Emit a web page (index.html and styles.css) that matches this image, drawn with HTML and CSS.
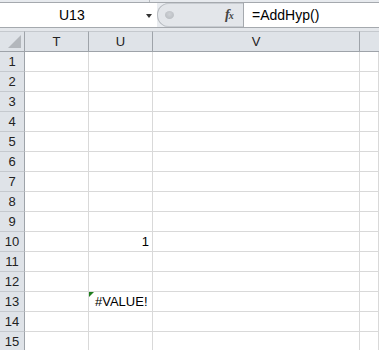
FILE: index.html
```html
<!DOCTYPE html>
<html>
<head>
<meta charset="utf-8">
<link rel="stylesheet" href="styles.css">
</head>
<body>
<div class="app">
  <div class="topstrip"><span class="tick"></span></div>
  <div class="fbar">
    <div class="namebox"><span class="name">U13</span><span class="arrow"></span></div>
    <div class="pill"><span class="knob"></span><span class="fx"><i>f</i><i class="x">x</i></span></div>
    <div class="formula">=AddHyp()</div>
  </div>
  <div class="gap"></div>
  <div class="grid">
    <div class="hd corner"><span class="tri"></span></div>
    <div class="hd">T</div>
    <div class="hd">U</div>
    <div class="hd">V</div>
    <div class="hd last"></div>

    <div class="rh">1</div><div class="c"></div><div class="c"></div><div class="c"></div><div class="c"></div>
    <div class="rh">2</div><div class="c"></div><div class="c"></div><div class="c"></div><div class="c"></div>
    <div class="rh">3</div><div class="c"></div><div class="c"></div><div class="c"></div><div class="c"></div>
    <div class="rh">4</div><div class="c"></div><div class="c"></div><div class="c"></div><div class="c"></div>
    <div class="rh">5</div><div class="c"></div><div class="c"></div><div class="c"></div><div class="c"></div>
    <div class="rh">6</div><div class="c"></div><div class="c"></div><div class="c"></div><div class="c"></div>
    <div class="rh">7</div><div class="c"></div><div class="c"></div><div class="c"></div><div class="c"></div>
    <div class="rh">8</div><div class="c"></div><div class="c"></div><div class="c"></div><div class="c"></div>
    <div class="rh">9</div><div class="c"></div><div class="c"></div><div class="c"></div><div class="c"></div>
    <div class="rh">10</div><div class="c"></div><div class="c num">1</div><div class="c"></div><div class="c"></div>
    <div class="rh">11</div><div class="c"></div><div class="c"></div><div class="c"></div><div class="c"></div>
    <div class="rh">12</div><div class="c"></div><div class="c"></div><div class="c"></div><div class="c"></div>
    <div class="rh">13</div><div class="c"></div><div class="c err"><span class="flag"></span>#VALUE!</div><div class="c"></div><div class="c"></div>
    <div class="rh">14</div><div class="c"></div><div class="c"></div><div class="c"></div><div class="c"></div>
    <div class="rh">15</div><div class="c"></div><div class="c"></div><div class="c"></div><div class="c"></div>
  </div>
</div>
</body>
</html>
```

FILE: styles.css
```css
html, body {
  margin: 0;
  padding: 0;
  background: #ffffff;
}
body {
  width: 379px;
  height: 350px;
  overflow: hidden;
  font-family: "Liberation Sans", Arial, sans-serif;
  font-size: 13px;
  color: #000;
}
.app {
  width: 379px;
}
.topstrip {
  height: 2px;
  background: #e7eaee;
  border-bottom: 1px solid #a5a9ae;
  position: relative;
}
.tick {
  position: absolute;
  left: 149px;
  top: 0;
  width: 1px;
  height: 2px;
  background: #b9bcc0;
}
.fbar {
  display: flex;
  height: 24px;
  border-bottom: 1px solid #a5a9ae;
  background: #e9ecf0;
}
.namebox {
  width: 157px;
  background: #fff;
  display: flex;
  align-items: center;
  position: relative;
}
.name {
  margin-left: 59px;
  font-size: 14px;
}
.arrow {
  position: absolute;
  left: 146px;
  top: 11px;
  width: 0;
  height: 0;
  border-left: 3px solid transparent;
  border-right: 3px solid transparent;
  border-top: 4px solid #333;
}
.pill {
  width: 86px;
  background: #e3e6ea;
  border-radius: 12px 0 0 12px;
  box-shadow: inset 1px 0 0 #b8bcc1, inset 0 1px 0 #c8ccd1, inset 0 -1px 0 #c8ccd1;
  display: flex;
  align-items: center;
  position: relative;
}
.knob {
  position: absolute;
  left: 8px;
  top: 8px;
  width: 9px;
  height: 8px;
  border-radius: 50%;
  background: radial-gradient(circle at 50% 40%, #cfd2d6, #b4b8bd);
}
.fx {
  position: absolute;
  left: 68px;
  top: 4px;
  font-family: "Liberation Serif", serif;
  font-size: 14px;
  color: #444;
  font-weight: bold;
}
.fx i { font-style: italic; }
.fx .x { font-size: 10px; margin-left: -1px; }
.formula {
  flex: 1;
  background: #fff;
  border-left: 1px solid #a5a9ae;
  padding-left: 8px;
  font-size: 14px;
  line-height: 24px;
}
.gap {
  height: 3px;
  background: #e4e7eb;
}
.grid {
  display: grid;
  grid-template-columns: 25px 64px 64px 207px 19px;
  grid-auto-rows: 20px;
  grid-template-rows: 21px;
}
.hd {
  background: #dfe3e8;
  border-right: 1px solid #9ea3a9;
  border-bottom: 1px solid #9ea3a9;
  border-top: 1px solid #c5c9ce;
  box-sizing: border-box;
  text-align: center;
  line-height: 19px;
  font-size: 13px;
  color: #222;
}
.hd.last { border-right: none; }
.corner { position: relative; }
.tri {
  position: absolute;
  right: 3px;
  bottom: 3px;
  width: 0;
  height: 0;
  border-left: 13px solid transparent;
  border-bottom: 13px solid #b3b7bc;
}
.rh {
  background: #dfe3e8;
  border-right: 1px solid #9ea3a9;
  border-bottom: 1px solid #c5c9ce;
  box-sizing: border-box;
  text-align: center;
  line-height: 19px;
  font-size: 13px;
  color: #222;
}
.c {
  border-right: 1px solid #d9d9d9;
  border-bottom: 1px solid #d9d9d9;
  box-sizing: border-box;
  line-height: 19px;
  font-size: 13px;
  position: relative;
}
.num {
  text-align: right;
  padding-right: 3px;
}
.err {
  padding-left: 6px;
}
.flag {
  position: absolute;
  left: 0;
  top: 0;
  width: 0;
  height: 0;
  border-top: 5px solid #1e7d1e;
  border-right: 5px solid transparent;
}
```
